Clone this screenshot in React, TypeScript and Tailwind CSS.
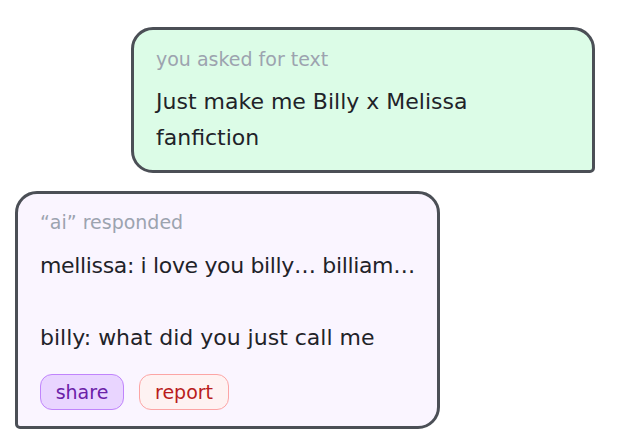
import React from "react";

export default function App() {
  return (
    <div className="w-[619px] h-[445px] bg-white relative" style={{ fontFamily: '"DejaVu Sans", "Noto Sans", sans-serif' }}>
      <div className="flex flex-col pt-[27px]">
        <div className="ml-[131px] w-[464px] h-[146px] bg-[#dcfce7] border-[3px] border-[#4b4f56] rounded-[22px] rounded-br-[5px] pl-[22px] pt-[16px]">
          <div className="text-[19px] leading-[26px] text-[#9ca3af]">you asked for text</div>
          <div className="mt-[12px] text-[22px] leading-[36px] text-[#1f2329] w-[400px]">Just make me Billy x Melissa fanfiction</div>
        </div>
        <div className="mt-[18px] ml-[15px] w-[425px] h-[238px] bg-[#faf5ff] border-[3px] border-[#4b4f56] rounded-[22px] rounded-bl-[5px] pl-[22px] pt-[15px]">
          <div className="text-[19px] leading-[26px] text-[#9ca3af]">“ai” responded</div>
          <div className="mt-[13px] text-[22px] leading-[36px] text-[#1f2329] whitespace-nowrap">
            <div className="tracking-[-0.35px]">mellissa: i love you billy… billiam…</div>
            <div>&nbsp;</div>
            <div>billy: what did you just call me</div>
          </div>
          <div className="flex gap-[15px] mt-[18px]">
            <div className="h-[36px] w-[84px] flex items-center justify-center rounded-[12px] bg-[#e9d5ff] border border-[#c084fc] text-[#6b21a8] text-[19px]">share</div>
            <div className="h-[36px] w-[90px] flex items-center justify-center rounded-[12px] bg-[#fef2f2] border border-[#fca5a5] text-[#b91c1c] text-[19px]">report</div>
          </div>
        </div>
      </div>
    </div>
  );
}
